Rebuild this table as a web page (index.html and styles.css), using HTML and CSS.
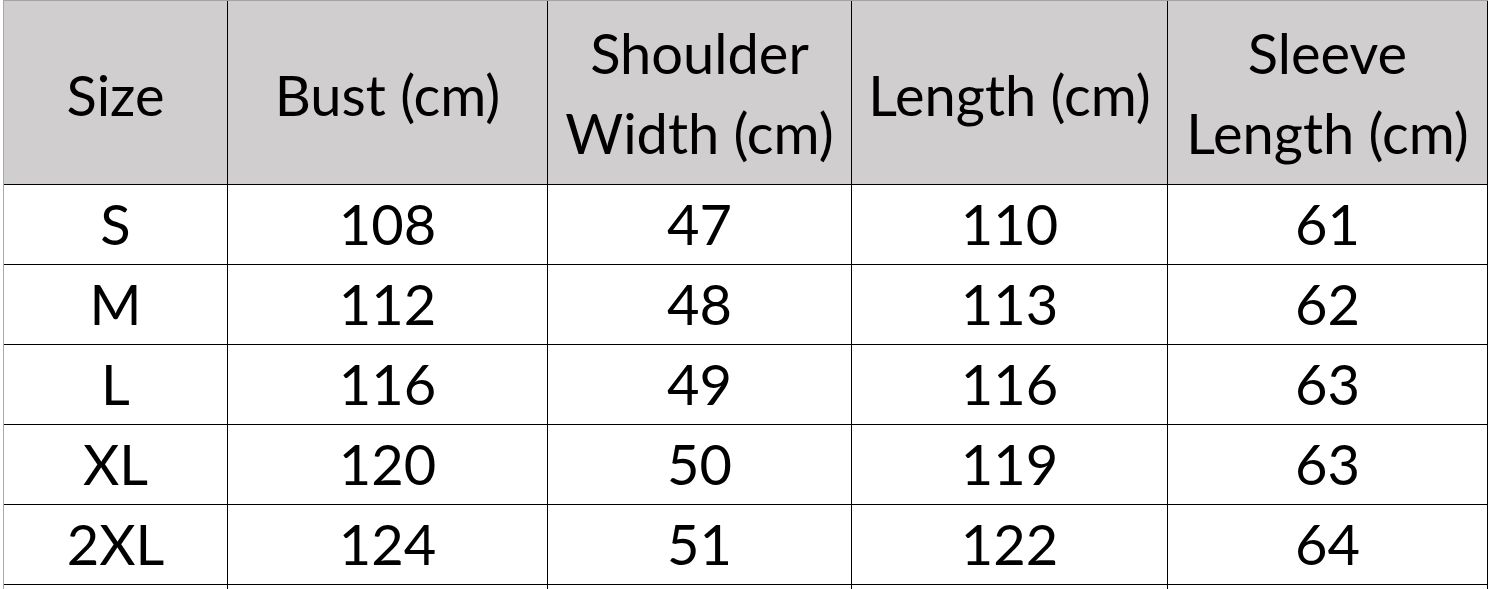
FILE: index.html
```
<!DOCTYPE html>
<html>
<head>
<meta charset="utf-8">
<link rel="stylesheet" href="styles.css">
</head>
<body>
<div class="sheet">
  <div class="cell head">Size</div>
  <div class="cell head">Bust (cm)</div>
  <div class="cell head two"><div class="lines"><span class="ln">Shoulder</span><span class="ln">Width (cm)</span></div></div>
  <div class="cell head">Length (cm)</div>
  <div class="cell head two"><div class="lines"><span class="ln">Sleeve</span><span class="ln">Length (cm)</span></div></div>

  <div class="cell">S</div><div class="cell">108</div><div class="cell">47</div><div class="cell">110</div><div class="cell">61</div>
  <div class="cell">M</div><div class="cell">112</div><div class="cell">48</div><div class="cell">113</div><div class="cell">62</div>
  <div class="cell">L</div><div class="cell">116</div><div class="cell">49</div><div class="cell">116</div><div class="cell">63</div>
  <div class="cell">XL</div><div class="cell">120</div><div class="cell">50</div><div class="cell">119</div><div class="cell">63</div>
  <div class="cell">2XL</div><div class="cell">124</div><div class="cell">51</div><div class="cell">122</div><div class="cell">64</div>

  <div class="tail"></div><div class="tail"></div><div class="tail"></div><div class="tail"></div><div class="tail"></div>
</div>
</body>
</html>
```
FILE: styles.css
```
html, body {
  margin: 0;
  padding: 0;
  background: #ffffff;
  overflow: hidden;
}

.sheet {
  display: grid;
  grid-template-columns: 224px 320px 304px 316px 320px;
  grid-template-rows: 184px repeat(5, 80px) 5px;
  margin-left: 3px;
  width: max-content;
  border-top: 1px solid #a3a3a3;
  border-left: 1px solid #a8a8a8;
  font-family: Lato, "Open Sans", sans-serif;
  font-size: 56px;
  line-height: 73px;
  color: #000000;
}

.cell {
  box-sizing: border-box;
  display: flex;
  align-items: center;
  justify-content: center;
  text-align: center;
  border-right: 1px solid #000000;
  border-bottom: 1px solid #000000;
  white-space: nowrap;
  padding-bottom: 2px;
}

.head {
  background: #d0cece;
  padding-top: 3px;
  padding-bottom: 0;
}

.head.two {
  padding-top: 0;
  padding-bottom: 0;
}

.lines {
  display: flex;
  flex-direction: column;
  align-items: center;
}

.ln {
  display: block;
  height: 80px;
  line-height: 80px;
}

.tail {
  box-sizing: border-box;
  border-right: 1px solid #000000;
}
```
